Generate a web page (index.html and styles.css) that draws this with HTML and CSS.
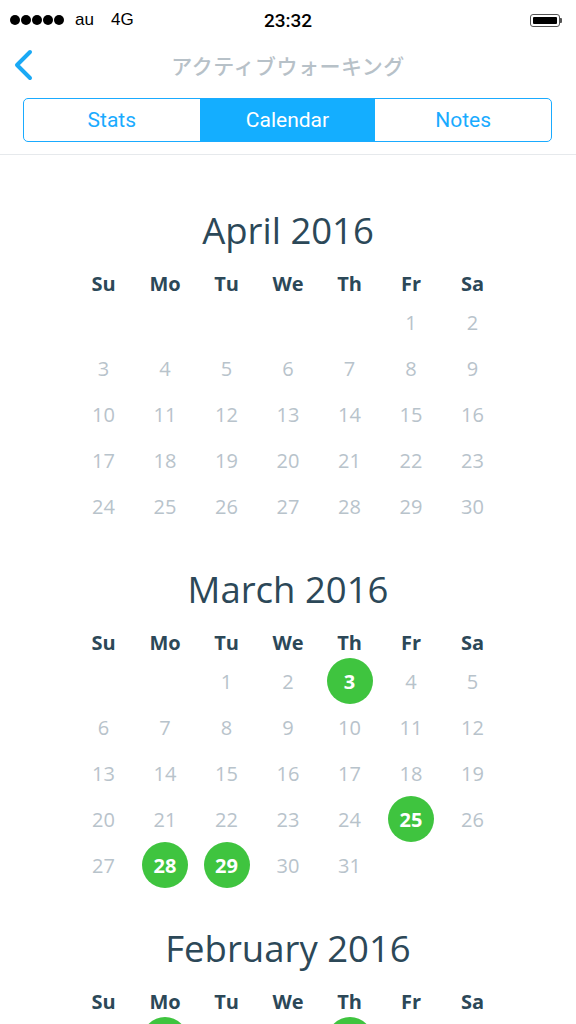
FILE: index.html
```html
<!DOCTYPE html>
<html>
<head>
<meta charset="utf-8">
<link rel="stylesheet" href="styles.css">
</head>
<body>
<div class="status">
  <div class="status-left">
    <span class="dots"><i></i><i></i><i></i><i></i><i></i></span>
    <span class="carrier">au</span>
    <span class="net">4G</span>
  </div>
  <div class="time">23:32</div>
  <div class="status-right">
    <span class="battery"><span class="level"></span></span><span class="nub"></span>
  </div>
</div>
<div class="nav">
  <svg class="back" width="22" height="32" viewBox="0 0 22 32"><path d="M18 3 L5 16 L18 29" fill="none" stroke="#1aa9f5" stroke-width="4" stroke-linecap="round" stroke-linejoin="round"/></svg>
  <div class="title">アクティブウォーキング</div>
</div>
<div class="segwrap">
  <div class="seg">
    <div class="segitem">Stats</div>
    <div class="segitem active">Calendar</div>
    <div class="segitem">Notes</div>
  </div>
</div>
<div class="content">
  <div class="month">
    <div class="mtitle">April 2016</div>
    <div class="grid week"><span>Su</span><span>Mo</span><span>Tu</span><span>We</span><span>Th</span><span>Fr</span><span>Sa</span></div>
    <div class="grid days">
      <span></span><span></span><span></span><span></span><span></span><span>1</span><span>2</span>
      <span>3</span><span>4</span><span>5</span><span>6</span><span>7</span><span>8</span><span>9</span>
      <span>10</span><span>11</span><span>12</span><span>13</span><span>14</span><span>15</span><span>16</span>
      <span>17</span><span>18</span><span>19</span><span>20</span><span>21</span><span>22</span><span>23</span>
      <span>24</span><span>25</span><span>26</span><span>27</span><span>28</span><span>29</span><span>30</span>
    </div>
  </div>
  <div class="month">
    <div class="mtitle">March 2016</div>
    <div class="grid week"><span>Su</span><span>Mo</span><span>Tu</span><span>We</span><span>Th</span><span>Fr</span><span>Sa</span></div>
    <div class="grid days">
      <span></span><span></span><span>1</span><span>2</span><span><b class="hit">3</b></span><span>4</span><span>5</span>
      <span>6</span><span>7</span><span>8</span><span>9</span><span>10</span><span>11</span><span>12</span>
      <span>13</span><span>14</span><span>15</span><span>16</span><span>17</span><span>18</span><span>19</span>
      <span>20</span><span>21</span><span>22</span><span>23</span><span>24</span><span><b class="hit">25</b></span><span>26</span>
      <span>27</span><span><b class="hit">28</b></span><span><b class="hit">29</b></span><span>30</span><span>31</span><span></span><span></span>
    </div>
  </div>
  <div class="month">
    <div class="mtitle">February 2016</div>
    <div class="grid week"><span>Su</span><span>Mo</span><span>Tu</span><span>We</span><span>Th</span><span>Fr</span><span>Sa</span></div>
    <div class="grid days">
      <span></span><span><b class="hit">1</b></span><span>2</span><span>3</span><span><b class="hit">4</b></span><span>5</span><span>6</span>
    </div>
  </div>
</div>
</body>
</html>
```
FILE: styles.css
```css
html, body { margin: 0; padding: 0; background: #fff; }
body { width: 576px; height: 1024px; overflow: hidden; font-family: "Open Sans", sans-serif; }

.status { height: 40px; display: flex; align-items: center; justify-content: space-between; padding: 0 10px; box-sizing: border-box; font-family: "Liberation Sans", Arial, sans-serif; color: #000; position: relative; }
.status-left { display: flex; align-items: center; font-size: 17px; }
.dots { display: flex; gap: 1px; margin-right: 11px; }
.dots i { width: 10px; height: 10px; border-radius: 50%; background: #000; display: block; }
.carrier { margin-right: 17px; }
.time { position: absolute; left: 0; right: 0; text-align: center; font-family: Roboto, "Liberation Sans", sans-serif; font-size: 19px; font-weight: 500; pointer-events: none; }
.status-right { display: flex; align-items: center; margin-right: 4px; }
.battery { width: 30px; height: 13px; border: 1px solid #555; border-radius: 3px; padding: 2px; box-sizing: border-box; display: flex; }
.level { flex: 1; background: #000; border-radius: 1px; }
.nub { width: 2px; height: 5px; background: #555; border-radius: 0 1px 1px 0; }

.nav { height: 50px; display: flex; align-items: center; justify-content: center; position: relative; }
.back { position: absolute; left: 12px; top: 9px; }
.title { font-family: "Noto Sans CJK JP", sans-serif; font-size: 21px; font-weight: 500; color: #b7c1c8; letter-spacing: 0.5px; }

.segwrap { padding: 8px 24px 12px 23px; border-bottom: 1px solid #e6e9ec; }
.seg { display: flex; height: 44px; border: 1.5px solid #1aabff; border-radius: 5px; overflow: hidden; box-sizing: border-box; }
.segitem { flex: 1; display: flex; align-items: center; justify-content: center; font-family: Roboto, "Liberation Sans", sans-serif; font-size: 21px; color: #1aabff; }
.segitem.active { background: #14aeff; color: #fff; }

.content { padding-top: 53px; }
.month { margin-bottom: 38px; }
.mtitle { text-align: center; font-size: 36.5px; line-height: 44px; color: #2c4858; font-weight: 400; margin-bottom: 17px; }
.grid { display: grid; grid-template-columns: repeat(7, 61.5px); justify-content: center; }
.week span { text-align: center; font-weight: 700; font-size: 20px; line-height: 30px; color: #2c4858; }
.days span { height: 46px; display: flex; align-items: center; justify-content: center; font-size: 20px; color: #b8c3cb; }
.hit { width: 46px; height: 46px; border-radius: 50%; background: #3fc43f; color: #fff; font-weight: 700; display: flex; align-items: center; justify-content: center; font-size: 20px; }
```
